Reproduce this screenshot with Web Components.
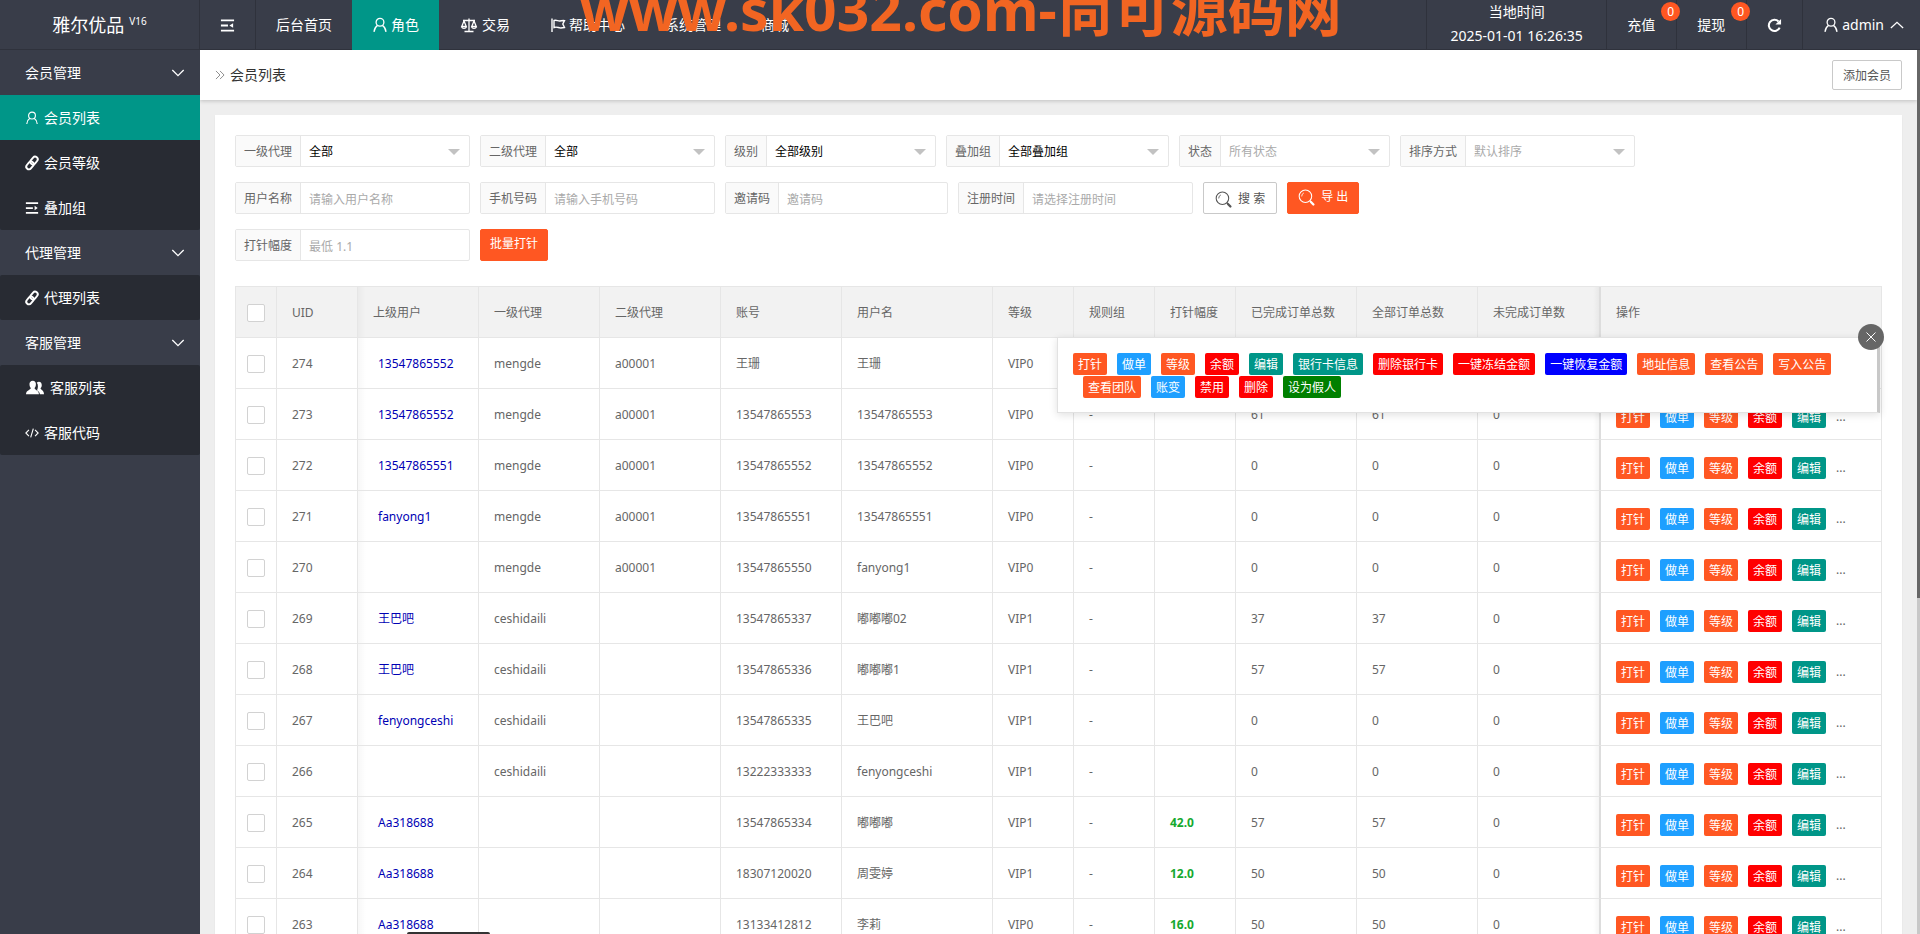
<!DOCTYPE html>
<html lang="zh-CN">
<head>
<meta charset="utf-8">
<title>会员列表</title>
<style>
html, body { margin: 0; height: 100%; }
body { font: 14px/24px "Noto Sans", "Noto Sans CJK SC", sans-serif; color: #666; background: #eee; overflow: hidden; }
</style>
</head>
<body>
<admin-app></admin-app>
<script>
const define = (name, html, setup) => {
  const tpl = document.createElement('template');
  tpl.innerHTML = html;
  customElements.define(name, class extends HTMLElement {
    constructor() {
      super();
      this.attachShadow({ mode: 'open' }).appendChild(tpl.content.cloneNode(true));
    }
    connectedCallback() {
      if (setup && !this.ready) { this.ready = true; setup.call(this, this.shadowRoot); }
    }
  });
};

/* ---------- icons ---------- */
const ICONS = {
  user: '<circle cx="8" cy="5.2" r="3.9"/><path d="M5.600 8.400C3.600 9.600 2.400 11.600 2 14.800M10.400 8.400c2 1.200 3.200 3.200 3.600 6.400"/>',
  fold: '<path stroke-width="2" d="M1 2.500h14M1 8h7.500M1 13.500h14"/><path fill="currentColor" stroke="none" d="M14 5.500v5L10 8z"/>',
  stack: '<path stroke-width="2" d="M1 2.500h14M1 8h8M1 13.500h14"/><path fill="currentColor" stroke="none" d="M11 5.500v5l3.500-2.500z"/>',
  scale: '<path d="M8 1.500v13M3.500 14.500h9M2 3.500h12M3 4L.700 9.500h4.600zM13 4l-2.300 5.500h4.600z"/><path d="M.7 9.800c.5 2 4.100 2 4.600 0M10.700 9.800c.5 2 4.100 2 4.600 0"/>',
  flag: '<path stroke-width="1.400" d="M2 1.500v13.500M4 3.500c2.500-1 4 .8 6 .5 1.500-.2 2.500-.6 4.500-.4L12.800 7l1.700 3.500c-2 .4-3 .6-4.500.4-2-.3-3.500-1.400-6-.4z"/>',
  link: '<g stroke-width="2.200" transform="rotate(-50 8 8)"><rect x="-.5" y="5" width="9.800" height="6" rx="3"/><rect x="6.700" y="5" width="9.800" height="6" rx="3"/></g>',
  users: '<g fill="currentColor" stroke="none"><path d="M11.500 2.500c1.600 0 2.700 1.300 2.500 3.200-.1 1.100-.6 2-1.100 2.600.1 1.600 3.100 1.600 3.100 5.200h-3.600c-.5-2.200-1.800-2.600-2.600-3.400 1-1.800 1.200-5.200-.2-6.700.5-.6 1.100-.9 1.900-.9z"/><path d="M6 1.500c2 0 3 1.500 2.800 3.500-.1 1.300-.6 2.300-1.200 3 .1 1.900 3.900 2 3.900 5.500H0C0 10 4.100 9.900 4.300 8c-.6-.7-1.100-1.700-1.200-3C2.900 3 4 1.500 6 1.500z"/></g>',
  code: '<path stroke-width="1.300" d="M4.500 4.500L1 8l3.500 3.500M11.500 4.500L15 8l-3.500 3.500M9.500 3L6.500 13"/>',
  down: '<path stroke-width="1.500" d="M1.500 4.500L8 11l6.500-6.500"/>',
  up: '<path stroke-width="1.500" d="M1 11.500L8 5l7 6.500"/>',
  more: '<path stroke-width="1.500" d="M1.500 1.500L8 8l-6.500 6.500M8 1.500L14.500 8 8 14.500"/>',
  reload: '<path stroke-width="2.200" d="M13.500 10.200A6 6 0 1 1 12.300 3.700"/><path fill="currentColor" stroke="none" d="M15 1v6H9z"/>',
  search: '<circle cx="7" cy="6.800" r="5.900" stroke-width="1"/><path d="M3.500 7a3.400 3.400 0 0 1 2-3.300" stroke-width=".8"/><path d="M11.200 11l1 1"/><path stroke-width="2.200" d="M12.200 12.200l2.300 2.400" stroke-linecap="round"/>',
  close: '<path stroke-width="1.300" d="M2 2l12 12M14 2L2 14"/>'
};
define('ui-icon', `<style>
  :host { display: inline-flex; flex: none; width: 16px; height: 16px; }
  svg { width: 100%; height: 100%; display: block; overflow: visible; }
</style><svg viewBox="0 0 16 16" fill="none" stroke="currentColor" stroke-width="1.3" aria-hidden="true"></svg>`,
function (root) { root.querySelector('svg').innerHTML = ICONS[this.getAttribute('name')]; });

/* ---------- header ---------- */
define('nav-item', `<style>
  :host { display: flex; position: relative; height: 50px; box-sizing: border-box; }
  :host([ruled]) { border-left: 1px solid #2f323c; }
  a { display: flex; align-items: center; gap: 3px; padding: 0 20px; color: #fff; text-decoration: none; white-space: nowrap; }
  :host([active]) a { background: #009688; }
  :host([counted]) a { padding-right: 21px; }
</style><a href="#"><slot></slot></a><slot name="badge"></slot>`);

define('count-badge', `<style>
  :host { position: absolute; top: 2px; right: -4px; width: 19px; height: 19px; border-radius: 50%; background: #ff5722;
    color: #fff; font-size: 12px; line-height: 19px; text-align: center; z-index: 1; }
</style><slot></slot>`);

define('app-header', `<style>
  :host { display: flex; height: 50px; background: #393d49; color: #fff; position: relative; box-shadow: inset 0 -1px #2f323c; }
  .logo { width: 200px; box-sizing: border-box; border-right: 1px solid #2f323c; display: flex; justify-content: center; gap: 5px;
    font-size: 18px; line-height: 50px; }
  sup { font-size: 10px; line-height: 42px; vertical-align: baseline; }
  .toggle { border-right: 1px solid #2f323c; }
  .spacer { flex: 1; }
  .time { border-left: 1px solid #2f323c; padding: 0 20px; text-align: center; min-width: 139px; }
  .time div { line-height: 24px; }
  .icon { width: 15px; height: 15px; }
  .wide { width: 20px; }
  .caret { width: 14px; height: 14px; margin: 0 -4px 0 3px; }
  .mark { position: absolute; left: 580px; top: -19px; color: #f26522; font-size: 57px; font-weight: 700; line-height: 57px; white-space: nowrap; pointer-events: none; z-index: 2; }
</style>
<div class="logo"><span>雅尔优品</span><sup>V16</sup></div>
<nav-item class="toggle"><ui-icon name="fold" class="icon"></ui-icon></nav-item>
<nav-item>后台首页</nav-item>
<nav-item active><ui-icon name="user"></ui-icon>角色</nav-item>
<nav-item><ui-icon name="scale" class="wide"></ui-icon>交易</nav-item>
<nav-item><ui-icon name="flag"></ui-icon>帮助中心</nav-item>
<nav-item>系统管理</nav-item>
<nav-item>商城</nav-item>
<div class="spacer"></div>
<div class="time"><div>当地时间</div><div>2025-01-01 16:26:35</div></div>
<nav-item ruled counted>充值<count-badge slot="badge">0</count-badge></nav-item>
<nav-item ruled counted>提现<count-badge slot="badge">0</count-badge></nav-item>
<nav-item ruled><ui-icon name="reload" class="icon"></ui-icon></nav-item>
<nav-item ruled><ui-icon name="user"></ui-icon>admin<ui-icon name="up" class="caret"></ui-icon></nav-item>
<div class="mark">www.sk032.com-尚可源码网</div>`);

/* ---------- side menu ---------- */
define('side-link', `<style>
  :host { display: block; }
  a { display: flex; align-items: center; gap: 5px; height: 45px; padding-left: 25px; color: #fff; text-decoration: none; }
  :host([active]) a { background: #009688; }
  ui-icon { width: 14px; height: 14px; }
  :host([icon="users"]) ui-icon { width: 20px; height: 18px; }
</style><a href="#"><ui-icon></ui-icon><slot></slot></a>`,
function (root) {
  const old = root.querySelector('ui-icon'), icon = document.createElement('ui-icon');
  icon.setAttribute('name', this.getAttribute('icon'));
  old.replaceWith(icon);
});

define('side-group', `<style>
  :host { display: block; }
  button { display: flex; align-items: center; justify-content: space-between; width: 100%; height: 45px; padding: 0 15px 0 25px;
    border: 0; background: none; color: #fff; font: inherit; }
  ui-icon { width: 14px; height: 14px; }
  .links { background: #282b33; border-radius: 2px; }
</style><button type="button"><slot name="title"></slot><ui-icon name="down"></ui-icon></button><div class="links"><slot></slot></div>`);

define('side-menu', `<style>
  :host { display: block; width: 200px; flex: none; background: #393d49; }
</style>
<side-group><span slot="title">会员管理</span>
  <side-link icon="user" active>会员列表</side-link><side-link icon="link">会员等级</side-link><side-link icon="stack">叠加组</side-link></side-group>
<side-group><span slot="title">代理管理</span><side-link icon="link">代理列表</side-link></side-group>
<side-group><span slot="title">客服管理</span><side-link icon="users">客服列表</side-link><side-link icon="code">客服代码</side-link></side-group>`);

/* ---------- title bar ---------- */
define('crumb-bar', `<style>
  :host { display: flex; align-items: center; height: 50px; padding: 0 15px; background: #fff; box-shadow: 0 1px 4px rgba(0,0,0,.2); position: relative; color: #333; }
  ui-icon { width: 10px; height: 10px; color: #888; margin-right: 5px; }
  h1 { flex: 1; margin: 0; font: inherit; }
  button { height: 30px; padding: 2px 10px 0; border: 1px solid #c9c9c9; border-radius: 2px; background: #fff; color: #555; font: inherit; font-size: 12px; }
</style><ui-icon name="more"></ui-icon><h1>会员列表</h1><button type="button">添加会员</button>`);

/* ---------- filter form ---------- */
define('filter-field', `<style>
  :host { display: flex; height: 32px; box-sizing: border-box; border: 1px solid #e6e6e6; border-radius: 2px; font-size: 12px; position: relative; background: #fff; }
  label { padding: 0 8px; line-height: 32px; background: #fafafa; border-right: 1px solid #e6e6e6; white-space: nowrap; }
  input, select { width: 168px; height: 30px; box-sizing: border-box; padding: 2px 8px 0; border: 0; background: none; outline: 0; font: inherit; color: #000; appearance: none; }
  input::placeholder { color: #aaa; opacity: 1; }
  select.dim { color: #aaa; }
  i { display: none; position: absolute; right: 9px; top: 13px; border: 6px solid transparent; border-top-color: #c2c2c2; border-bottom: 0; pointer-events: none; }
  :host([kind=select]) i { display: block; }
</style><label for="f"></label><i></i>`,
function (root) {
  const label = root.querySelector('label');
  label.textContent = this.getAttribute('label');
  let box;
  if (this.getAttribute('kind') === 'select') {
    box = document.createElement('select');
    box.add(new Option(this.getAttribute('value')));
    if (this.hasAttribute('dim')) box.className = 'dim';
  } else {
    box = document.createElement('input');
    box.type = 'text';
    box.placeholder = this.getAttribute('value');
  }
  box.id = 'f';
  label.after(box);
});

define('filter-form', `<style>
  :host { display: flex; flex-direction: column; gap: 15px; }
  .row { display: flex; flex-wrap: wrap; gap: 10px; }
  button { display: flex; align-items: center; gap: 6px; height: 32px; box-sizing: border-box; padding: 2px 11px 0; border: 1px solid #c9c9c9; border-radius: 2px;
    background: #fff; color: #555; font: inherit; font-size: 12px; white-space: nowrap; }
  .hot { border-color: #ff5722; background: #ff5722; color: #fff; padding: 0 10px 2px; }
  .plain { padding: 0 9px 2px; }
  ui-icon { width: 17px; height: 17px; }
</style>
<div class="row">
  <filter-field kind="select" label="一级代理" value="全部"></filter-field>
  <filter-field kind="select" label="二级代理" value="全部"></filter-field>
  <filter-field kind="select" label="级别" value="全部级别"></filter-field>
  <filter-field kind="select" label="叠加组" value="全部叠加组"></filter-field>
  <filter-field kind="select" label="状态" value="所有状态" dim></filter-field>
  <filter-field kind="select" label="排序方式" value="默认排序" dim></filter-field>
</div>
<div class="row">
  <filter-field label="用户名称" value="请输入用户名称"></filter-field>
  <filter-field label="手机号码" value="请输入手机号码"></filter-field>
  <filter-field label="邀请码" value="邀请码"></filter-field>
  <filter-field label="注册时间" value="请选择注册时间"></filter-field>
  <button type="button"><ui-icon name="search"></ui-icon>搜 索</button>
  <button type="button" class="hot"><ui-icon name="search"></ui-icon>导 出</button>
</div>
<div class="row">
  <filter-field label="打针幅度" value="最低 1.1"></filter-field>
  <button type="button" class="hot plain">批量打针</button>
</div>`);

/* ---------- action buttons ---------- */
define('act-btn', `<style>
  :host { display: inline-flex; --tone: #ff5722; }
  :host([tone=blue]) { --tone: #1e9fff; }
  :host([tone=red]) { --tone: #f00; }
  :host([tone=teal]) { --tone: #009688; }
  :host([tone=deep]) { --tone: #00f; }
  :host([tone=green]) { --tone: #008000; }
  button { height: 22px; padding: 1px 5px 0; border: 0; border-radius: 2px; background: var(--tone); color: #fff; font: inherit; font-size: 12px; line-height: 22px; white-space: nowrap; }
</style><button type="button"><slot></slot></button>`);
const act = (text, tone) => `<act-btn tone="${tone || 'orange'}">${text}</act-btn>`;
const BASE = act('打针') + act('做单', 'blue') + act('等级') + act('余额', 'red') + act('编辑', 'teal');

define('more-actions', `<style>
  :host { display: block; box-sizing: border-box; width: 823px; padding: 15px 15px 14px; border: 1px solid #e2e2e2; border-right: 3px solid #c8c8c8; background: #fff; box-shadow: 0 2px 8px rgba(0,0,0,.12); }
  .list { display: flex; flex-wrap: wrap; gap: 1px 0; }
  act-btn + act-btn { margin-left: 10px; }
  .close { position: absolute; right: -7px; top: -14px; width: 26px; height: 26px; padding: 7px; border: 0; border-radius: 50%; background: #666; color: #fff; }
  .close ui-icon { display: flex; width: 12px; height: 12px; }
</style><div class="list">${BASE}${act('银行卡信息', 'teal')}${act('删除银行卡', 'red')}${act('一键冻结金额', 'red')}${act('一键恢复金额', 'deep')}${act('地址信息')}${act('查看公告')}${act('写入公告')}${act('查看团队')}${act('账变', 'blue')}${act('禁用', 'red')}${act('删除', 'red')}${act('设为假人', 'green')}</div>
<button type="button" class="close" aria-label="关闭"><ui-icon name="close"></ui-icon></button>`);

/* ---------- table ---------- */
const HEAD = ['UID', '上级用户', '一级代理', '二级代理', '账号', '用户名', '等级', '规则组', '打针幅度', '已完成订单总数', '全部订单总数', '未完成订单数', '操作'];
const ROWS = [
  ['274', '13547865552', 'mengde', 'a00001', '王珊', '王珊', 'VIP0', '', '', '', '', ''],
  ['273', '13547865552', 'mengde', 'a00001', '13547865553', '13547865553', 'VIP0', '-', '', '61', '61', '0'],
  ['272', '13547865551', 'mengde', 'a00001', '13547865552', '13547865552', 'VIP0', '-', '', '0', '0', '0'],
  ['271', 'fanyong1', 'mengde', 'a00001', '13547865551', '13547865551', 'VIP0', '-', '', '0', '0', '0'],
  ['270', '', 'mengde', 'a00001', '13547865550', 'fanyong1', 'VIP0', '-', '', '0', '0', '0'],
  ['269', '王巴吧', 'ceshidaili', '', '13547865337', '嘟嘟嘟02', 'VIP1', '-', '', '37', '37', '0'],
  ['268', '王巴吧', 'ceshidaili', '', '13547865336', '嘟嘟嘟1', 'VIP1', '-', '', '57', '57', '0'],
  ['267', 'fenyongceshi', 'ceshidaili', '', '13547865335', '王巴吧', 'VIP1', '-', '', '0', '0', '0'],
  ['266', '', 'ceshidaili', '', '13222333333', 'fenyongceshi', 'VIP1', '-', '', '0', '0', '0'],
  ['265', 'Aa318688', '', '', '13547865334', '嘟嘟嘟', 'VIP1', '-', '42.0', '57', '57', '0'],
  ['264', 'Aa318688', '', '', '18307120020', '周雯婷', 'VIP1', '-', '12.0', '50', '50', '0'],
  ['263', 'Aa318688', '', '', '13133412812', '李莉', 'VIP0', '-', '16.0', '50', '50', '0']
];
const WIDTHS = [41, 81, 121, 121, 121, 121, 151, 81, 81, 81, 121, 121, 122];
const cell = (v, i) => i === 1 && v ? `<td><a href="#">${v}</a></td>` : i === 8 && v ? `<td><b>${v}</b></td>` : `<td>${v}</td>`;

define('user-table', `<style>
  :host { display: block; position: relative; }
  table { width: 100%; table-layout: fixed; border-collapse: separate; border-spacing: 0; border: solid #e6e6e6; border-width: 1px 0 0 1px; font-size: 12px; }
  th, td { height: 51px; box-sizing: border-box; padding: 2px 15px 0; border: solid #e6e6e6; border-width: 0 1px 1px 0; text-align: left; font-weight: 400; white-space: nowrap; overflow: hidden; }
  th { background-color: #f2f2f2; }
  th:first-child, td:first-child { padding: 2px 11px 0; }
  th:nth-child(3), td:nth-child(3) { background-image: linear-gradient(to right, rgba(0,0,0,.03), transparent 8px); }
  th:nth-child(13), td:nth-child(13) { background-image: linear-gradient(to left, rgba(0,0,0,.04), transparent 6px); border-right-color: #ddd; }
  th:last-child, td:last-child { border-left: 1px solid #ddd; }
  input { display: block; appearance: none; width: 18px; height: 18px; margin: 0; border: 1px solid #d2d2d2; border-radius: 2px; background: #fff; }
  td a { color: #0000b4; text-decoration: none; padding-left: 5px; }
  b { color: #16a92f; }
  .acts { display: flex; align-items: center; gap: 10px; padding-top: 3px; }
  more-actions { position: absolute; top: 51px; right: 2px; }
</style>
<table><colgroup>${WIDTHS.map(w => `<col style="width:${w}px">`).join('')}<col></colgroup>
<thead><tr><th><input type="checkbox" aria-label="全选"></th>${HEAD.map(h => `<th>${h}</th>`).join('')}</tr></thead>
<tbody>${ROWS.map((r, n) => `<tr><td><input type="checkbox" aria-label="选择 ${r[0]}"></td>${r.map(cell).join('')}<td>${n ? `<div class="acts">${BASE}<span>...</span></div>` : ''}</td></tr>`).join('')}</tbody></table>
<more-actions></more-actions>`);

/* ---------- page ---------- */
define('admin-app', `<style>
  :host { display: flex; flex-direction: column; height: 100vh; overflow: hidden; }
  .body { display: flex; flex: 1; min-height: 0; }
  main { flex: 1; min-width: 0; overflow: hidden; }
  .card { margin: 15px; padding: 20px; background: #fff; display: flex; flex-direction: column; gap: 25px; box-shadow: 0 1px 2px rgba(0,0,0,.05); }
  .track { width: 3px; background: #c8c8c8; }
  .thumb { height: 62%; background: #666; }
  .tip { position: absolute; left: 407px; bottom: 0; width: 83px; height: 2px; border-radius: 2px 2px 0 0; background: #333; }
</style>
<app-header></app-header>
<div class="body">
  <side-menu></side-menu>
  <main><crumb-bar></crumb-bar><div class="card"><filter-form></filter-form><user-table></user-table></div></main>
  <div class="track"><div class="thumb"></div></div>
</div>
<div class="tip"></div>`);
</script>
</body>
</html>
